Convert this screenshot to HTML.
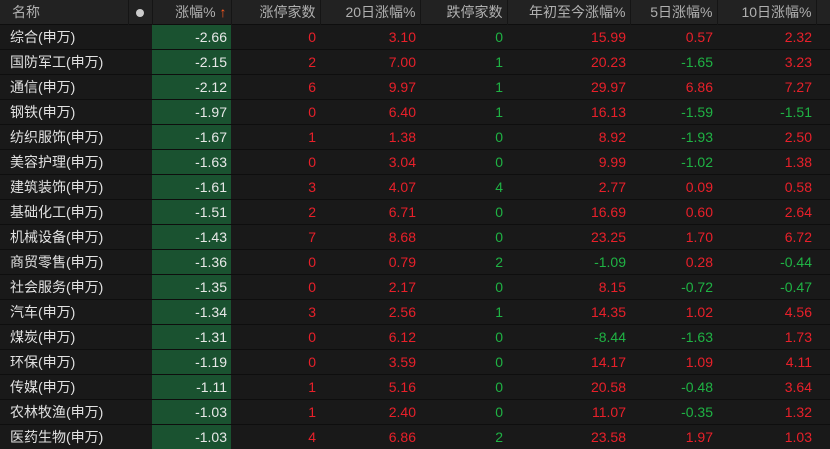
<!DOCTYPE html><html><head><meta charset="utf-8"><style>
body{margin:0;background:#1a1a1a;width:830px;height:448px;overflow:hidden;font-family:"Liberation Sans","Noto Sans CJK SC",sans-serif;font-size:14px}
table{border-collapse:collapse;table-layout:fixed;width:830px}
td,th{padding:0 4px 0 0;text-align:right;white-space:nowrap;overflow:hidden}
th{height:24px;background:#222;color:#b0b0b0;font-weight:normal;border-right:1px solid #151515}
td{height:24px;border-top:1px solid #0e0e0e;background:#191919}
td.n{text-align:left;padding-left:10px;color:#e0e0e0}
th.n{text-align:left;padding-left:12px}
td.g{background:#1a5230;color:#e8e8e8}
.r{color:#e8202a}.gr{color:#1fb344}
</style></head><body><table>
<colgroup><col style="width:128px"><col style="width:24px"><col style="width:79px"><col style="width:89px"><col style="width:100px"><col style="width:87px"><col style="width:123px"><col style="width:87px"><col style="width:99px"><col style="width:14px"></colgroup>
<tr><th class="n">名称</th><th style="text-align:center;padding:0"><span style="display:inline-block;width:8px;height:8px;border-radius:50%;background:#ccc"></span></th><th>涨幅% <span style="color:#ff5a1f">↑</span></th><th>涨停家数</th><th>20日涨幅%</th><th>跌停家数</th><th>年初至今涨幅%</th><th>5日涨幅%</th><th>10日涨幅%</th><th></th></tr>
<tr><td class="n">综合(申万)</td><td></td><td class="g">-2.66</td><td class="r">0</td><td class="r">3.10</td><td class="gr">0</td><td class="r">15.99</td><td class="r">0.57</td><td class="r">2.32</td><td></td></tr>
<tr><td class="n">国防军工(申万)</td><td></td><td class="g">-2.15</td><td class="r">2</td><td class="r">7.00</td><td class="gr">1</td><td class="r">20.23</td><td class="gr">-1.65</td><td class="r">3.23</td><td></td></tr>
<tr><td class="n">通信(申万)</td><td></td><td class="g">-2.12</td><td class="r">6</td><td class="r">9.97</td><td class="gr">1</td><td class="r">29.97</td><td class="r">6.86</td><td class="r">7.27</td><td></td></tr>
<tr><td class="n">钢铁(申万)</td><td></td><td class="g">-1.97</td><td class="r">0</td><td class="r">6.40</td><td class="gr">1</td><td class="r">16.13</td><td class="gr">-1.59</td><td class="gr">-1.51</td><td></td></tr>
<tr><td class="n">纺织服饰(申万)</td><td></td><td class="g">-1.67</td><td class="r">1</td><td class="r">1.38</td><td class="gr">0</td><td class="r">8.92</td><td class="gr">-1.93</td><td class="r">2.50</td><td></td></tr>
<tr><td class="n">美容护理(申万)</td><td></td><td class="g">-1.63</td><td class="r">0</td><td class="r">3.04</td><td class="gr">0</td><td class="r">9.99</td><td class="gr">-1.02</td><td class="r">1.38</td><td></td></tr>
<tr><td class="n">建筑装饰(申万)</td><td></td><td class="g">-1.61</td><td class="r">3</td><td class="r">4.07</td><td class="gr">4</td><td class="r">2.77</td><td class="r">0.09</td><td class="r">0.58</td><td></td></tr>
<tr><td class="n">基础化工(申万)</td><td></td><td class="g">-1.51</td><td class="r">2</td><td class="r">6.71</td><td class="gr">0</td><td class="r">16.69</td><td class="r">0.60</td><td class="r">2.64</td><td></td></tr>
<tr><td class="n">机械设备(申万)</td><td></td><td class="g">-1.43</td><td class="r">7</td><td class="r">8.68</td><td class="gr">0</td><td class="r">23.25</td><td class="r">1.70</td><td class="r">6.72</td><td></td></tr>
<tr><td class="n">商贸零售(申万)</td><td></td><td class="g">-1.36</td><td class="r">0</td><td class="r">0.79</td><td class="gr">2</td><td class="gr">-1.09</td><td class="r">0.28</td><td class="gr">-0.44</td><td></td></tr>
<tr><td class="n">社会服务(申万)</td><td></td><td class="g">-1.35</td><td class="r">0</td><td class="r">2.17</td><td class="gr">0</td><td class="r">8.15</td><td class="gr">-0.72</td><td class="gr">-0.47</td><td></td></tr>
<tr><td class="n">汽车(申万)</td><td></td><td class="g">-1.34</td><td class="r">3</td><td class="r">2.56</td><td class="gr">1</td><td class="r">14.35</td><td class="r">1.02</td><td class="r">4.56</td><td></td></tr>
<tr><td class="n">煤炭(申万)</td><td></td><td class="g">-1.31</td><td class="r">0</td><td class="r">6.12</td><td class="gr">0</td><td class="gr">-8.44</td><td class="gr">-1.63</td><td class="r">1.73</td><td></td></tr>
<tr><td class="n">环保(申万)</td><td></td><td class="g">-1.19</td><td class="r">0</td><td class="r">3.59</td><td class="gr">0</td><td class="r">14.17</td><td class="r">1.09</td><td class="r">4.11</td><td></td></tr>
<tr><td class="n">传媒(申万)</td><td></td><td class="g">-1.11</td><td class="r">1</td><td class="r">5.16</td><td class="gr">0</td><td class="r">20.58</td><td class="gr">-0.48</td><td class="r">3.64</td><td></td></tr>
<tr><td class="n">农林牧渔(申万)</td><td></td><td class="g">-1.03</td><td class="r">1</td><td class="r">2.40</td><td class="gr">0</td><td class="r">11.07</td><td class="gr">-0.35</td><td class="r">1.32</td><td></td></tr>
<tr><td class="n">医药生物(申万)</td><td></td><td class="g">-1.03</td><td class="r">4</td><td class="r">6.86</td><td class="gr">2</td><td class="r">23.58</td><td class="r">1.97</td><td class="r">1.03</td><td></td></tr>
</table></body></html>
